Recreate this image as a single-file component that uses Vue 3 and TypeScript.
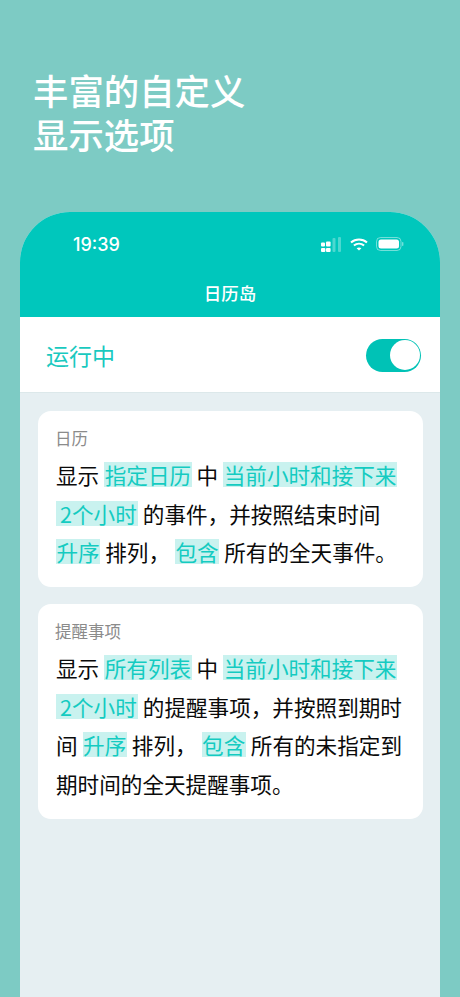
<script setup lang="ts">
interface Seg { t: string; h?: boolean; d?: boolean }
interface Card { label: string; lines: Seg[][] }
const cards: Card[] = [
  {
    label: '日历',
    lines: [
      [{ t: '显示' }, { t: '指定日历', h: true }, { t: '中' }, { t: '当前小时和接下来', h: true }],
      [{ t: '2个小时', h: true, d: true }, { t: '的事件，并按照结束时间' }],
      [{ t: '升序', h: true }, { t: '排列，' }, { t: '包含', h: true }, { t: '所有的全天事件。' }],
    ],
  },
  {
    label: '提醒事项',
    lines: [
      [{ t: '显示' }, { t: '所有列表', h: true }, { t: '中' }, { t: '当前小时和接下来', h: true }],
      [{ t: '2个小时', h: true, d: true }, { t: '的提醒事项，并按照到期时' }],
      [{ t: '间' }, { t: '升序', h: true }, { t: '排列，' }, { t: '包含', h: true }, { t: '所有的未指定到' }],
      [{ t: '期时间的全天提醒事项。' }],
    ],
  },
]
</script>

<template>
  <main class="page">
    <h1 class="title">丰富的自定义<br />显示选项</h1>
    <section class="phone">
      <header class="head">
        <div class="status">
          <span class="time">19:39</span>
          <div class="icons">
            <svg width="22" height="15" viewBox="0 0 22 15" fill="#fff">
              <rect x="1" y="5.5" width="4" height="4" rx="1" />
              <rect x="6" y="4.5" width="4.6" height="5" rx="1" />
              <rect x="1" y="11" width="4.4" height="4" rx="1" />
              <rect x="6" y="11" width="4.6" height="4" rx="1" />
              <rect x="12.5" y="1" width="3" height="14" rx="1" opacity=".3" />
              <rect x="18" y="0" width="3" height="15" rx="1" opacity=".3" />
            </svg>
            <svg width="18" height="13" viewBox="0 0 18 13" fill="none" stroke="#fff" stroke-width="2">
              <path d="M1 4.6C5.6.5 12.4.5 17 4.6" />
              <path d="M3.9 7.6c3-2.6 7.2-2.6 10.2 0" />
              <path d="M9 12.6 6.6 10.2c1.4-1.1 3.4-1.1 4.8 0Z" fill="#fff" stroke="none" />
            </svg>
            <svg width="28" height="14" viewBox="0 0 28 14" fill="none">
              <rect x=".5" y=".5" width="24.5" height="13" rx="4" stroke="#fff" stroke-opacity=".45" />
              <rect x="2.5" y="2.5" width="20.5" height="9" rx="2.5" fill="#fff" />
              <rect x="26" y="5" width="1.4" height="4" rx=".7" fill="#fff" fill-opacity=".45" />
            </svg>
          </div>
        </div>
        <div class="nav">日历岛</div>
      </header>
      <div class="run">
        <span class="run-label">运行中</span>
        <div class="toggle"><span class="knob"></span></div>
      </div>
      <div class="body">
        <article v-for="c in cards" :key="c.label" class="card">
          <div class="label">{{ c.label }}</div>
          <div class="text">
            <div v-for="(line, i) in c.lines" :key="i" class="line">
              <span
                v-for="(s, j) in line"
                :key="j"
                :class="[s.h ? 'hl' : 'plain', { digit: s.d }]"
              >{{ s.t }}</span>
            </div>
          </div>
        </article>
      </div>
    </section>
  </main>
</template>

<style>
html, body { margin: 0; padding: 0; background: #7dcbc4; }
</style>

<style scoped>
.page {
  width: 460px;
  height: 997px;
  overflow: hidden;
  background: #7dcbc4;
  font-family: "Noto Sans CJK SC", "Noto Sans", sans-serif;
  display: flex;
  flex-direction: column;
  align-items: center;
}
.title {
  align-self: flex-start;
  margin: 68px 0 0 33px;
  height: 89px;
  font-size: 35.4px;
  line-height: 44px;
  font-weight: 500;
  color: #fff;
}
.phone {
  margin-top: 55px;
  width: 420px;
  flex: 1;
  display: flex;
  flex-direction: column;
  background: #e6eff2;
  border-radius: 50px 50px 0 0;
  overflow: hidden;
}
.head {
  height: 105px;
  background: #00c7bc;
  color: #fff;
}
.status {
  height: 64px;
  box-sizing: border-box;
  padding: 0 36px 0 53px;
  display: flex;
  align-items: center;
  justify-content: space-between;
}
.time {
  font-family: Inter, Roboto, sans-serif;
  font-size: 18px;
  font-weight: 500;
}
.icons { display: flex; align-items: center; gap: 8px; }
.nav {
  text-align: center;
  font-size: 17.5px;
  line-height: 24px;
  font-weight: 500;
  margin-top: 5px;
}
.run {
  height: 76px;
  box-sizing: border-box;
  background: #fff;
  border-bottom: 1px solid #dce8ea;
  display: flex;
  align-items: center;
  justify-content: space-between;
  padding: 1px 19px 0 26px;
}
.run-label { font-size: 23px; color: #19c9bf; }
.toggle {
  width: 55px;
  height: 33px;
  border-radius: 17px;
  background: #00c2b6;
  position: relative;
}
.knob {
  position: absolute;
  right: 1.5px;
  top: 1.5px;
  width: 30px;
  height: 30px;
  border-radius: 50%;
  background: #fff;
}
.body {
  padding: 18px 17px 0 18px;
  display: flex;
  flex-direction: column;
  gap: 17px;
}
.card {
  background: #fff;
  border-radius: 13px;
  padding: 15px 0 16px 18px;
}
.label {
  font-size: 16.5px;
  line-height: 24px;
  color: #8b8b8b;
  margin-left: -1px;
}
.text {
  margin-top: 5px;
  font-size: 21.6px;
  color: #0a0a0a;
}
.line {
  display: flex;
  align-items: center;
  height: 38.7px;
  white-space: nowrap;
}
.plain { margin-right: 5px; }
.hl {
  line-height: 25px;
  height: 25px;
  padding: 0 .5px;
  margin-right: 5px;
  background: #c9f2ef;
  color: #14cbc1;
}
.hl.digit { padding: 0 1px 0 4px; }
</style>
